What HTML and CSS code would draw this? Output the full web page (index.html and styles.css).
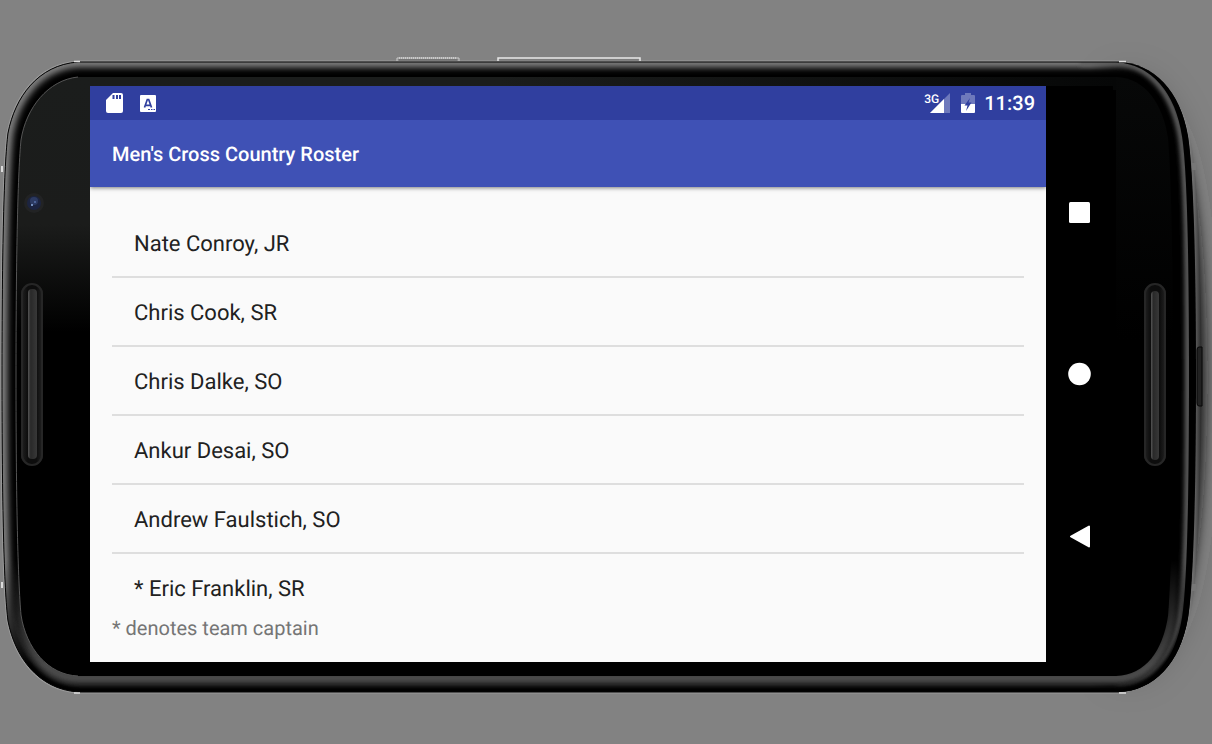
FILE: index.html
```html
<!DOCTYPE html>
<html lang="en">
<head>
<meta charset="utf-8">
<meta name="viewport" content="width=device-width, initial-scale=1">
<title>Men's Cross Country Roster</title>
<link rel="stylesheet" href="styles.css">
</head>
<body>
<div class="phone">
  <svg class="phone-art" viewBox="0 0 1212 744" preserveAspectRatio="none" aria-hidden="true">
    <defs>
      <path id="shell" d="M78 62H1118C1154 63 1180 91 1188 136C1193 168 1196 250 1196 377C1196 504 1193 586 1188 618C1180 663 1154 691 1118 692H78C38 689 15 657 8 621C4 590 2 504 2 377C2 250 4 164 8 133C15 97 38 65 78 62Z"/>
      <path id="glass" d="M78 77H1116C1146 78 1163 105 1168 138C1171 175 1173 250 1173 377C1173 504 1171 579 1168 616C1163 650 1146 675 1116 676H78C48 675 26 648 21 615C18 580 16 504 16 377C16 250 18 170 21 140C26 108 48 80 78 77Z"/>
      <clipPath id="shellClip"><use href="#shell"/></clipPath>
      <clipPath id="glassClip"><use href="#glass"/></clipPath>
      <clipPath id="leftHalf"><path d="M0 0H1119V744H0Z"/></clipPath>
      <filter id="soft2" filterUnits="userSpaceOnUse" x="-20" y="0" width="1260" height="744"><feGaussianBlur stdDeviation="2"/></filter>
      <filter id="soft3" filterUnits="userSpaceOnUse" x="-20" y="0" width="1260" height="744"><feGaussianBlur stdDeviation="3"/></filter>
      <filter id="soft6" filterUnits="userSpaceOnUse" x="1040" y="0" width="240" height="744"><feGaussianBlur stdDeviation="6"/></filter>
      <filter id="soft20" filterUnits="userSpaceOnUse" x="1000" y="-60" width="320" height="864"><feGaussianBlur stdDeviation="20"/></filter>
      <linearGradient id="fadeLeft" gradientUnits="userSpaceOnUse" x1="1090" y1="0" x2="1140" y2="0">
        <stop offset="0" stop-color="#fff"/><stop offset="1" stop-color="#000"/>
      </linearGradient>
      <mask id="leftMask" maskUnits="userSpaceOnUse" x="0" y="0" width="1212" height="744"><path d="M0 0H1212V744H0Z" fill="url(#fadeLeft)"/></mask>
      <linearGradient id="fadeDown" gradientUnits="userSpaceOnUse" x1="0" y1="560" x2="0" y2="665">
        <stop offset="0" stop-color="#000"/><stop offset="1" stop-color="#fff"/>
      </linearGradient>
      <mask id="lowerMask" maskUnits="userSpaceOnUse" x="0" y="0" width="1212" height="744"><path d="M0 0H1212V744H0Z" fill="url(#fadeDown)"/></mask>
      <linearGradient id="sheen" gradientUnits="userSpaceOnUse" x1="0" y1="77" x2="0" y2="345">
        <stop offset="0" stop-color="#1b1d1c"/><stop offset=".55" stop-color="#1b1c1b"/><stop offset=".95" stop-color="#000"/>
      </linearGradient>
      <linearGradient id="topSheen" gradientUnits="userSpaceOnUse" x1="500" y1="0" x2="1116" y2="0">
        <stop offset="0" stop-color="#1b1d1c"/><stop offset="1" stop-color="#060707"/>
      </linearGradient>
      <linearGradient id="rightSheen" gradientUnits="userSpaceOnUse" x1="0" y1="77" x2="0" y2="340">
        <stop offset="0" stop-color="#070808"/><stop offset="1" stop-color="#000"/>
      </linearGradient>
      <linearGradient id="slot" x1="0" y1="0" x2="1" y2="0">
        <stop offset="0" stop-color="#242424"/><stop offset=".3" stop-color="#0d0d0d"/><stop offset=".7" stop-color="#0d0d0d"/><stop offset="1" stop-color="#242424"/>
      </linearGradient>
      <linearGradient id="bar" x1="0" y1="0" x2="1" y2="0">
        <stop offset="0" stop-color="#555"/><stop offset=".3" stop-color="#292929"/><stop offset="1" stop-color="#383838"/>
      </linearGradient>
      <linearGradient id="metal" gradientUnits="userSpaceOnUse" x1="1186" y1="0" x2="1202" y2="0">
        <stop offset="0" stop-color="#888"/><stop offset=".5" stop-color="#686868"/><stop offset="1" stop-color="#242424"/>
      </linearGradient>
    </defs>

    <path d="M1120 80C1180 100 1194 190 1198 377C1194 564 1180 654 1120 674Z" fill="#333" fill-opacity=".5" filter="url(#soft20)"/>
    <path d="M1130 78C1184 108 1202 180 1204 377C1202 574 1184 646 1130 676Z" fill="#161616" filter="url(#soft6)"/>
    <path d="M1118 61C1158 64 1184 98 1192 148C1198 190 1201 270 1201 377C1201 484 1198 564 1192 606C1184 656 1158 690 1118 693Z" fill="url(#metal)"/>
    <use href="#shell" fill="#777" stroke="#999" stroke-width="3" clip-path="url(#leftHalf)"/>
    <use href="#shell" fill="#000"/>
    <g clip-path="url(#shellClip)">
      <g mask="url(#leftMask)">
        <use href="#shell" fill="none" stroke="#808080" stroke-width="11" filter="url(#soft3)"/>
      </g>
      <path d="M1080 63H1116C1149 64 1173 92 1181 137C1187 180 1188 260 1188 377C1188 494 1187 574 1181 617C1173 662 1149 686 1116 690" fill="none" stroke="#606060" stroke-width="6" filter="url(#soft2)"/>
      <path d="M1116 59C1154 62 1178 91 1185 136C1190 168 1192 250 1192 377C1192 504 1190 586 1185 618C1178 663 1154 691 1116 694" fill="none" stroke="#000" stroke-width="6"/>
      <g mask="url(#lowerMask)">
        <path d="M8 540V621C15 657 38 689 78 692H1118C1154 691 1180 663 1188 618V540" fill="none" stroke="#000" stroke-width="14" filter="url(#soft2)"/>
        <path d="M16 540L22 615C27 651 48 678 78 678H1116C1147 678 1166 652 1171 616L1174 540" fill="none" stroke="#484848" stroke-width="11" filter="url(#soft2)"/>
      </g>
    </g>
    <use href="#shell" fill="none" stroke="#050505" stroke-width="1" clip-path="url(#leftHalf)"/>
    <use href="#glass" fill="#000"/>
    <g clip-path="url(#glassClip)">
      <path d="M0 70H500V345H0Z" fill="url(#sheen)"/>
      <path d="M500 70H1116V90H500Z" fill="url(#topSheen)"/>
      <path d="M1116 70H1180V345H1116Z" fill="url(#rightSheen)"/>
    </g>
    <path d="M78 77C48 80 26 108 21 140C18 170 16 250 16 377C16 504 18 580 21 615C26 648 48 675 78 676" fill="none" stroke="#555" stroke-width="1"/>

    <path d="M397 61V58H459V61" fill="none" stroke="#ccc" stroke-width="1"/>
    <path d="M399 58H457" fill="none" stroke="#eee" stroke-width="1" stroke-dasharray="1 1"/>
    <path d="M399 60H457" fill="none" stroke="#666" stroke-width="1"/>
    <path d="M498 61V58H640V61" fill="none" stroke="#e8e8e8" stroke-width="1.500"/>
    <path d="M500 60H638" stroke="#777" stroke-width="1"/>
    <path d="M74 61.500H80M1119 61.500H1126M74 693H80M1119 693H1126" stroke="#ddd" stroke-width="1.500"/>
    <path d="M2 166V172M2 582V588" stroke="#ddd" stroke-width="2"/>
    <path d="M1194 163V170M1194 584V591" stroke="#777" stroke-width="4"/>
    <path d="M1202 347H1199Q1197 347 1197 350V403Q1197 406 1199 406H1202Z" fill="#222" stroke="#060606"/>

    <circle cx="34" cy="203" r="10" fill="#222324"/>
    <circle cx="34" cy="203" r="7" fill="#1c2440"/>
    <circle cx="34" cy="201" r="4" fill="#2c3a62"/>
    <circle cx="32" cy="205" r="1" fill="#8daee0"/>
    <circle cx="35" cy="202" r="1" fill="#5671a8"/>

    <rect x="21" y="283" width="22" height="183" rx="11" fill="url(#slot)"/>
    <rect x="22" y="284" width="20" height="181" rx="10" fill="none" stroke="#262626" stroke-width="2"/>
    <rect x="28" y="289" width="9" height="170" rx="4" fill="url(#bar)"/>
    <rect x="1144" y="283" width="22" height="183" rx="11" fill="url(#slot)"/>
    <rect x="1145" y="284" width="20" height="181" rx="10" fill="none" stroke="#262626" stroke-width="2"/>
    <rect x="1151" y="291" width="8" height="169" rx="4" fill="url(#bar)"/>
  </svg>

  <div class="screen">
    <div class="status-bar">
      <svg class="icon-card" viewBox="0 0 17 20" aria-hidden="true">
        <path d="M7 0H15Q17 0 17 2V18Q17 20 15 20H2Q0 20 0 18V7Z" fill="#fff"/>
        <path d="M7.500 2V6M11 2V6M14 2V6" stroke="#303f9f" stroke-width="2"/>
      </svg>
      <svg class="icon-keyboard" viewBox="0 0 16 17" aria-hidden="true">
        <rect width="16" height="17" rx="1" fill="#fff"/>
        <path d="M4.500 12.500L7.300 4.500H8.700L11.500 12.500M5.500 10.300H10.500" fill="none" stroke="#303f9f" stroke-width="1.700"/>
        <path d="M8 14.500H10M11 14.500H12.500M13.500 14.500H15" stroke="#303f9f" stroke-width="1"/>
      </svg>
      <span class="spacer"></span>
      <span class="signal">
        <span class="network">3G</span>
        <svg class="icon-signal" viewBox="0 0 20 20" aria-hidden="true">
          <path d="M20 0V20H0Z" fill="#fff" fill-opacity=".3"/>
          <path d="M14 6V20H0Z" fill="#fff"/>
        </svg>
      </span>
      <svg class="icon-battery" viewBox="0 0 14 20" aria-hidden="true">
        <path d="M4 0H10V2H13Q14 2 14 3V11H0V3Q0 2 1 2H4Z" fill="#fff" fill-opacity=".3"/>
        <path d="M0 11H14V19Q14 20 13 20H1Q0 20 0 19Z" fill="#fff"/>
        <path d="M9 5L3.500 12.500H6.500L5 18L10.500 9.500H7.500Z" fill="#303f9f"/>
      </svg>
      <time class="clock">11:39</time>
    </div>
    <header class="app-bar"><h1 class="title">Men's Cross Country Roster</h1></header>
    <main class="content">
      <ul class="roster">
        <li class="runner">Nate Conroy, JR</li>
        <li class="runner">Chris Cook, SR</li>
        <li class="runner">Chris Dalke, SO</li>
        <li class="runner">Ankur Desai, SO</li>
        <li class="runner">Andrew Faulstich, SO</li>
        <li class="runner">* Eric Franklin, SR</li>
      </ul>
      <p class="note">* denotes team captain</p>
    </main>
  </div>

  <nav class="system-nav" aria-label="System">
    <button class="nav-button" type="button" aria-label="Overview">
      <svg class="nav-icon" viewBox="0 0 24 24"><rect x="1" y="2" width="21" height="21" rx="1.500" fill="#fff"/></svg>
    </button>
    <button class="nav-button" type="button" aria-label="Home">
      <svg class="nav-icon" viewBox="0 0 24 24"><circle cx="11.500" cy="12" r="11.300" fill="#fff"/></svg>
    </button>
    <button class="nav-button" type="button" aria-label="Back">
      <svg class="nav-icon" viewBox="0 0 24 24"><path d="M3 12.500L21 2.500V22.500Z" fill="#fff" stroke="#fff" stroke-width="2" stroke-linejoin="round"/></svg>
    </button>
  </nav>
</div>
</body>
</html>
```
FILE: styles.css
```css
* { box-sizing: border-box; }

body {
  margin: 0;
  background: #828282;
  font-family: Roboto, "Noto Sans", sans-serif;
  text-rendering: geometricPrecision;
}

.phone {
  position: relative;
  display: grid;
  grid-template-columns: 1fr 67px;
  min-height: 100vh;
  padding: 86px 99px 82px 90px;
  overflow: hidden;
}

.phone-art {
  position: absolute;
  inset: 0;
  width: 100%;
  height: 100%;
}

.screen {
  position: relative;
  display: flex;
  flex-direction: column;
  background: #fafafa;
}

.status-bar {
  display: flex;
  align-items: center;
  height: 34px;
  padding: 0 11px 0 16px;
  background: #303f9f;
  color: #fff;
}

.icon-card { width: 17px; height: 20px; }
.icon-keyboard { width: 16px; height: 17px; margin-left: 17px; }
.spacer { flex: 1; }

.signal {
  display: flex;
  align-items: flex-start;
}

.network {
  margin-right: -9px;
  font-size: 12px;
  font-weight: 500;
  line-height: 12px;
}

.icon-signal { width: 20px; height: 20px; }
.icon-battery { width: 14px; height: 20px; margin: 0 9px 0 11px; }

.clock {
  font-size: 20px;
  font-weight: 500;
  line-height: 24px;
}

.app-bar {
  position: relative;
  display: flex;
  align-items: center;
  height: 67px;
  padding: 0 22px;
  background: #3f51b5;
  box-shadow: 0 1px 4px rgba(0, 0, 0, 0.5);
  clip-path: inset(0 0 -8px 0);
}

.title {
  margin: 0;
  color: #fff;
  font-size: 20px;
  font-weight: 500;
  line-height: 24px;
}

.content {
  display: flex;
  flex: 1;
  flex-direction: column;
  padding: 22px;
}

.roster {
  flex: 1;
  margin: 0;
  padding: 0;
  list-style: none;
}

.runner {
  padding: 22px 22px 17px;
  color: #212121;
  font-size: 22px;
  line-height: 28px;
}

.runner:not(:last-child) { border-bottom: 2px solid #dedede; }
.runner:last-child { padding-bottom: 0; }

.note {
  margin: 0;
  color: #757575;
  font-size: 20px;
  line-height: 24px;
}

.system-nav {
  position: relative;
  display: flex;
  flex-direction: column;
  align-items: center;
  padding: 45px 0;
  background: #000;
}

.nav-button {
  display: grid;
  flex: 1;
  width: 100%;
  padding: 0;
  place-items: center;
  border: 0;
  background: transparent;
}

.nav-icon { width: 24px; height: 24px; }
```
